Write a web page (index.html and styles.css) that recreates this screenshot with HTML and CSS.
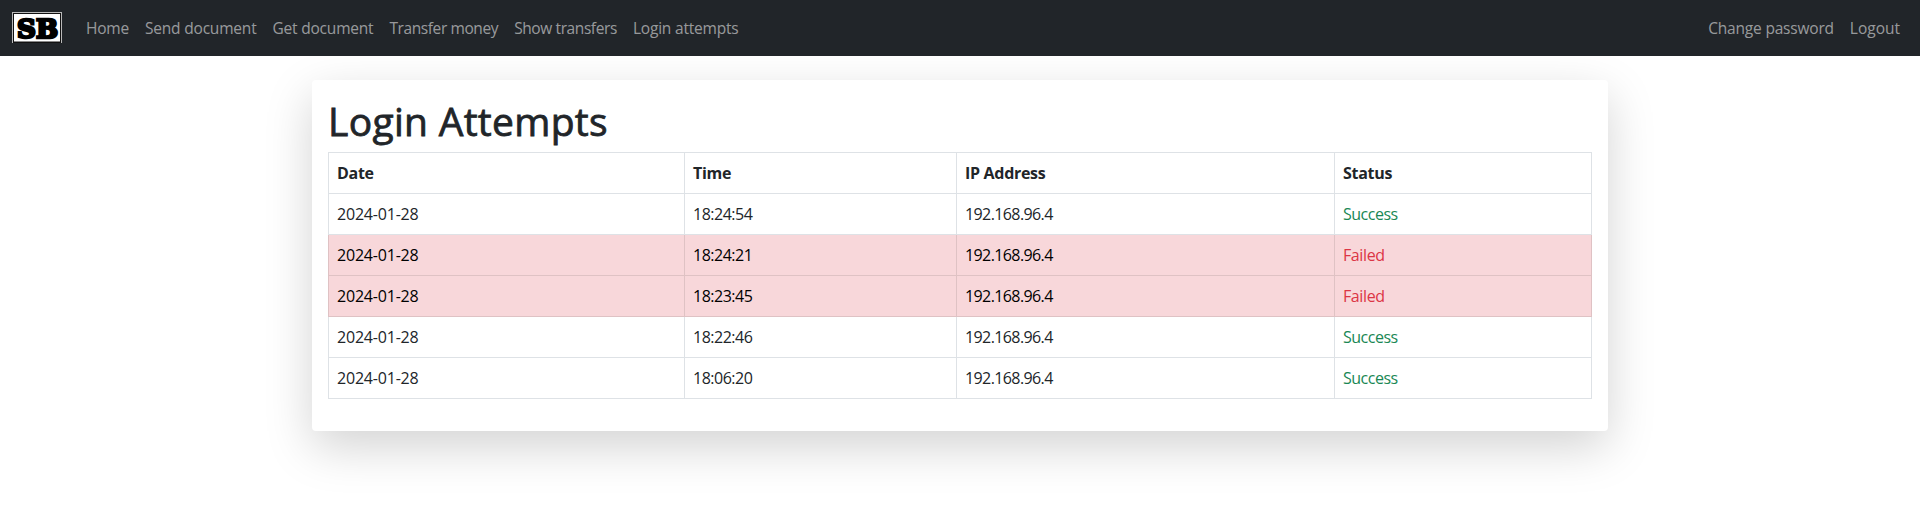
FILE: index.html
```html
<!DOCTYPE html>
<html lang="en">
<head>
<meta charset="utf-8">
<title>Login Attempts</title>
<link rel="stylesheet" href="styles.css">
</head>
<body>
<nav class="navbar">
  <a class="brand" href="#" aria-label="SB">
    <svg class="brand-logo" width="50" height="31" viewBox="0 0 50 31">
      <rect width="50" height="31" fill="#b9b9b9"/>
      <rect x="1" y="1" width="48" height="30" fill="#111"/>
      <rect x="2" y="2" width="46" height="27.5" fill="#fff"/>
      <text class="brand-text" x="5" y="25.5" textLength="41" lengthAdjust="spacingAndGlyphs">SB</text>
    </svg>
  </a>
  <ul class="links">
    <li><a class="link" href="#">Home</a></li>
    <li><a class="link" href="#">Send document</a></li>
    <li><a class="link" href="#">Get document</a></li>
    <li><a class="link snug" href="#">Transfer money</a></li>
    <li><a class="link snug" href="#">Show transfers</a></li>
    <li><a class="link" href="#">Login attempts</a></li>
  </ul>
  <ul class="links account">
    <li><a class="link" href="#">Change password</a></li>
    <li><a class="link wide" href="#">Logout</a></li>
  </ul>
</nav>
<main class="card">
  <h1 class="title">Login Attempts</h1>
  <table class="table">
    <colgroup><col class="c-date"><col class="c-time"><col class="c-ip"><col class="c-status"></colgroup>
    <thead>
      <tr><th>Date</th><th>Time</th><th>IP Address</th><th>Status</th></tr>
    </thead>
    <tbody>
      <tr><td>2024-01-28</td><td class="time">18:24:54</td><td class="ip">192.168.96.4</td><td class="success">Success</td></tr>
      <tr class="danger"><td>2024-01-28</td><td class="time">18:24:21</td><td class="ip">192.168.96.4</td><td class="failed">Failed</td></tr>
      <tr class="danger"><td>2024-01-28</td><td class="time">18:23:45</td><td class="ip">192.168.96.4</td><td class="failed">Failed</td></tr>
      <tr><td>2024-01-28</td><td class="time">18:22:46</td><td class="ip">192.168.96.4</td><td class="success">Success</td></tr>
      <tr><td>2024-01-28</td><td class="time">18:06:20</td><td class="ip">192.168.96.4</td><td class="success">Success</td></tr>
    </tbody>
  </table>
</main>
</body>
</html>
```
FILE: styles.css
```css
* { box-sizing: border-box; }
html { height: 100%; }
body {
  display: flow-root;
  height: 100%;
  margin: 0;
  font: 400 16px/24px "Segoe UI", "Open Sans", "Noto Sans", sans-serif;
  letter-spacing: -0.2px;
  color: #212529;
  background: #fff;
}
.navbar {
  position: relative;
  display: flex;
  align-items: center;
  height: 56px;
  padding: 0 12px 1px;
  background: #212529;
}
.brand { display: flex; margin-right: 16px; }
.brand-logo { overflow: visible; }
.brand-text {
  font: 700 26px "DejaVu Serif", serif;
  letter-spacing: 0;
  fill: #000;
  stroke: #000;
  stroke-width: 2.6px;
}
.links { display: flex; margin: 0; padding: 0; list-style: none; }
.account { margin-left: auto; }
.link {
  display: block;
  padding: 8px;
  font-size: 15.5px;
  white-space: nowrap;
  text-decoration: none;
  color: rgba(255, 255, 255, 0.55);
}
.link.snug { letter-spacing: -0.4px; }
.link.wide { letter-spacing: 0; }
.card {
  width: 1296px;
  height: 351px;
  margin: 24px auto 0;
  padding: 16px;
  border-radius: 4px;
  background: #fff;
  box-shadow: 0 16px 48px rgba(0, 0, 0, 0.175);
}
.title {
  margin: 0 0 7px;
  padding-top: 1px;
  font-size: 39px;
  font-weight: 500;
  line-height: 48px;
  letter-spacing: 0.3px;
  -webkit-text-stroke: 0.8px #212529;
}
.table {
  width: 1264px;
  table-layout: fixed;
  border-collapse: collapse;
}
.c-date { width: 356px; }
.c-time { width: 272px; }
.c-ip { width: 378px; }
.c-status { width: 257px; }
.table th, .table td {
  height: 41px;
  padding: 8px;
  border: 1px solid #dee2e6;
  text-align: left;
}
.table th { font-weight: 700; letter-spacing: -0.3px; }
.table .time { letter-spacing: -0.5px; }
.table .ip { letter-spacing: -0.6px; }
.table .danger td { background: #f8d7da; border-color: #dfc2c4; color: #000; }
.table .success { color: #198754; letter-spacing: -0.5px; }
.table .danger .failed { color: #dc3545; letter-spacing: -0.4px; }
```
